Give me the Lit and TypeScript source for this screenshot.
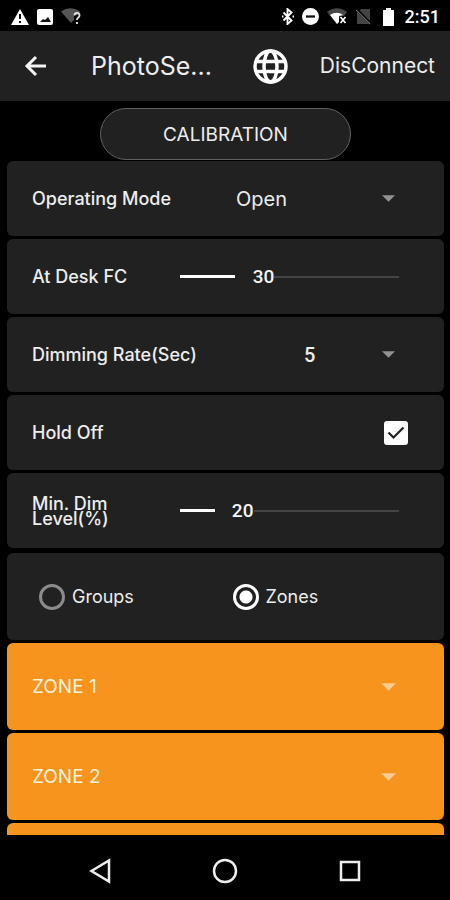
import { LitElement, html, css } from "lit";
import { customElement, property, state } from "lit/decorators.js";

const caret = html`<svg class="caret" viewBox="0 0 16 8" aria-hidden="true"><path d="M0 0h16L8 8z" fill="currentColor" /></svg>`;

const SLIDER_MAX = 85;
const THUMB = 42;

@customElement("level-slider")
class LevelSlider extends LitElement {
  @property({ type: Number }) value = 0;
  @property() label = "";

  static styles = css`
    :host { display: block; }
    .slider { position: relative; height: 28px; display: flex; align-items: center; }
    .track { position: absolute; left: 0; right: 0; height: 2px; background: #444; }
    .cover { position: absolute; left: 0; height: 4px; background: #212121; }
    .fill { position: absolute; left: 0; height: 3px; background: #fff; }
    .number {
      position: absolute; width: 42px; text-align: center; color: #f4f4f4;
      font: 500 19px/28px Roboto, sans-serif; pointer-events: none;
    }
    .range { appearance: none; background: none; position: relative; width: 100%; height: 28px; margin: 0; }
    .range::-webkit-slider-thumb { appearance: none; width: 42px; height: 28px; background: none; }
  `;

  render() {
    const ratio = this.value / SLIDER_MAX;
    const left = `(100% - ${THUMB}px) * ${ratio}`;
    return html`<div class="slider">
      <div class="track"></div>
      <div class="cover" style="width: calc(${left} + 32px)"></div>
      <div class="fill" style="width: max(0px, calc(${left} - 7px))"></div>
      <input class="range" type="range" min="0" max=${SLIDER_MAX} .value=${String(this.value)} aria-label=${this.label}
        @input=${(e: Event) => { this.value = Number((e.target as HTMLInputElement).value); }} />
      <output class="number" style="left: calc(${left})">${this.value}</output>
    </div>`;
  }
}

@customElement("app-root")
class AppRoot extends LitElement {
  @state() private target = "zones";

  static styles = css`
    :host {
      display: flex; flex-direction: column; height: 100vh; overflow: hidden;
      background: #000; color: #ededed; font-family: Inter, "Open Sans", sans-serif;
    }
    * { box-sizing: border-box; }
    button, select { font: inherit; color: inherit; background: none; border: 0; padding: 0; margin: 0; }
    svg { display: block; }
    .status { flex: none; height: 31px; padding: 2px 10px 0 11px; display: flex; align-items: center; justify-content: space-between; }
    .group { display: flex; align-items: center; gap: 8px; }
    .clock { font: 500 18px/24px Roboto, sans-serif; color: #fff; margin-left: 2px; }
    .header { flex: none; height: 70px; padding: 0 15px 0 24px; background: #212121; display: flex; align-items: center; }
    .title { margin: 0 0 0 43px; flex: 1; font-size: 25px; font-weight: 400; line-height: 32px; white-space: nowrap; }
    .connect { margin-left: 32px; font-size: 21px; line-height: 28px; }
    .content { flex: 1; min-height: 0; overflow: hidden; padding: 7px 6px 0 7px; display: flex; flex-direction: column; gap: 3px; }
    .calibrate {
      flex: none; align-self: center; width: 251px; height: 52px; margin-bottom: -2px;
      border: 1px solid #606060; border-radius: 26px; background: #212121; font-size: 19px;
    }
    .card {
      flex: none; height: 75px; padding: 0 45px 0 25px; border-radius: 6px; background: #212121;
      display: grid; grid-template-columns: 148px 1fr; align-items: center;
    }
    .label { font-size: 18px; font-weight: 500; line-height: 15px; white-space: nowrap; }
    .narrow { width: 100px; white-space: normal; }
    .picker { position: relative; display: flex; align-items: center; justify-content: flex-end; }
    .select { appearance: none; width: 100%; height: 40px; padding-left: 56px; font-size: 20px; outline-offset: 2px; }
    .digit { padding-left: 124px; font: 500 20px Roboto, sans-serif; }
    .caret { width: 15px; height: 8px; }
    .picker .caret { position: absolute; right: 4px; width: 13px; height: 7px; color: #929292; pointer-events: none; }
    .check { position: relative; justify-self: end; margin-right: -9px; display: grid; place-items: center; }
    .box { appearance: none; width: 24px; height: 24px; margin: 0; border: 2px solid #fff; border-radius: 3px; }
    .box:checked { background: #fff; }
    .tick { position: absolute; width: 18px; height: 14px; pointer-events: none; }
    .choices { height: 87px; margin-top: 2px; grid-template-columns: 1fr 1fr; padding: 0 18px 0 32px; }
    .choice { display: flex; align-items: center; gap: 7px; font-size: 18px; line-height: 24px; }
    .radio { appearance: none; width: 26px; height: 26px; margin: 0; border: 3px solid #8b8b8b; border-radius: 50%; }
    .radio:checked { border-color: #fff; background: radial-gradient(circle, #fff 6px, transparent 7px); }
    .zone {
      flex: none; height: 87px; width: 100%; padding: 0 48px 0 25px; border-radius: 6px; background: #f7941e;
      color: #fff3df; display: flex; align-items: center; justify-content: space-between; font-size: 19px;
    }
    .zone .caret { color: #fccb91; }
    .nav { flex: none; height: 65px; padding: 6px 38px 0; display: grid; grid-template-columns: repeat(3, 1fr); place-items: center; }
  `;

  private header() {
    return html`
      <div class="status">
        <div class="group">
          <svg width="18" height="16" viewBox="0 0 18 16"><path d="M9 0l9 16H0z" fill="#fff" /><path d="M8 5h2v5H8zM8 12h2v2H8z" fill="#111" /></svg>
          <svg width="16" height="16" viewBox="0 0 16 16"><rect width="16" height="16" rx="2" fill="#fff" /><path d="M3 13l3-3 2 1 3-3 3 5z" fill="#111" /></svg>
          <svg width="21" height="17" viewBox="0 0 21 17"><path d="M0 3.5Q9-3 19 3.500L16 7H13V12L10 15z" fill="#555" /><path d="M13.500 7.500q0-2.500 2.500-2.500t2.500 2.300q0 1.600-1.500 2.500-1 .7-1 2.200M16 14v2" fill="none" stroke="#ddd" stroke-width="1.900" /></svg>
        </div>
        <div class="group">
          <svg width="12" height="17" viewBox="0 0 12 17"><path d="M1.500 4.500l8 8-4 3.500V1l4 3.500-8 8M0 8.500h1.500M10.500 8.500H12" fill="none" stroke="#fff" stroke-width="1.900" /></svg>
          <svg width="17" height="17" viewBox="0 0 17 17"><circle cx="8.500" cy="8.500" r="8.500" fill="#fff" /><path d="M4 8.500h9" stroke="#111" stroke-width="2.300" /></svg>
          <svg width="21" height="17" viewBox="0 0 21 17"><path d="M0 4Q10-3.500 20 4L17 8H13L10 16z" fill="#484848" /><path d="M3 7Q10 2.500 16 7L12 8V14L10 16z" fill="#fff" /><path d="M13.500 9l5 6M18.500 9l-5 6" stroke="#fff" stroke-width="1.700" /></svg>
          <svg width="16" height="17" viewBox="0 0 16 17"><path d="M5 1h9v15H1V5z" fill="#444" /><path d="M0 1l15 15" stroke="#000" stroke-width="3" /><path d="M0 2l14 14" stroke="#666" stroke-width="1.200" /></svg>
          <svg width="15" height="18" viewBox="0 0 15 18"><path d="M6 0h5v2h3v16H3V2h3z" fill="#fff" /></svg>
          <span class="clock">2:51</span>
        </div>
      </div>
      <header class="header">
        <button aria-label="Back"><svg width="24" height="22" viewBox="0 0 24 22"><path d="M22 11H3M12 2l-9 9 9 9" fill="none" stroke="#f4f4f4" stroke-width="3" /></svg></button>
        <h1 class="title">PhotoSe...</h1>
        <button aria-label="Language"><svg width="35" height="35" viewBox="0 0 35 35"><g fill="none" stroke="#fff" stroke-width="3.500"><circle cx="17.500" cy="17.500" r="15.500" /><ellipse cx="17.500" cy="17.500" rx="6.500" ry="15.500" /><path d="M3.500 12.500h28M3.500 22.500h28" /></g></svg></button>
        <button class="connect">DisConnect</button>
      </header>`;
  }

  private radio(id: string, text: string) {
    return html`<label class="choice"><input class="radio" type="radio" name="target" .checked=${this.target === id}
      @change=${() => { this.target = id; }} />${text}</label>`;
  }

  render() {
    return html`
      ${this.header()}
      <main class="content">
        <button class="calibrate">CALIBRATION</button>
        <div class="card">
          <label class="label" for="mode">Operating Mode</label>
          <div class="picker"><select class="select" id="mode"><option>Open</option></select>${caret}</div>
        </div>
        <div class="card"><span class="label">At Desk FC</span><level-slider label="At Desk FC" .value=${30}></level-slider></div>
        <div class="card">
          <label class="label" for="rate">Dimming Rate(Sec)</label>
          <div class="picker"><select class="select digit" id="rate"><option>5</option></select>${caret}</div>
        </div>
        <div class="card">
          <label class="label" for="hold">Hold Off</label>
          <div class="check"><input class="box" id="hold" type="checkbox" checked />
            <svg class="tick" viewBox="0 0 18 14"><path d="M1.500 6.500l5 5 10-10" fill="none" stroke="#212121" stroke-width="2.200" /></svg></div>
        </div>
        <div class="card"><span class="label narrow">Min. Dim Level(%)</span><level-slider label="Min. Dim Level(%)" .value=${20}></level-slider></div>
        <div class="card choices" role="radiogroup" aria-label="Target">${this.radio("groups", "Groups")}${this.radio("zones", "Zones")}</div>
        <button class="zone">ZONE 1${caret}</button>
        <button class="zone">ZONE 2${caret}</button>
        <button class="zone" aria-label="Next zone"></button>
      </main>
      <nav class="nav">
        <button aria-label="Back"><svg width="22" height="26" viewBox="0 0 22 26"><path d="M20 2.500v21L2.500 13z" fill="none" stroke="#eee" stroke-width="2.500" /></svg></button>
        <button aria-label="Home"><svg width="26" height="26" viewBox="0 0 26 26"><circle cx="13" cy="13" r="11" fill="none" stroke="#eee" stroke-width="2.500" /></svg></button>
        <button aria-label="Recent apps"><svg width="22" height="22" viewBox="0 0 22 22"><rect x="2" y="2" width="18" height="18" fill="none" stroke="#eee" stroke-width="2.500" /></svg></button>
      </nav>`;
  }
}
